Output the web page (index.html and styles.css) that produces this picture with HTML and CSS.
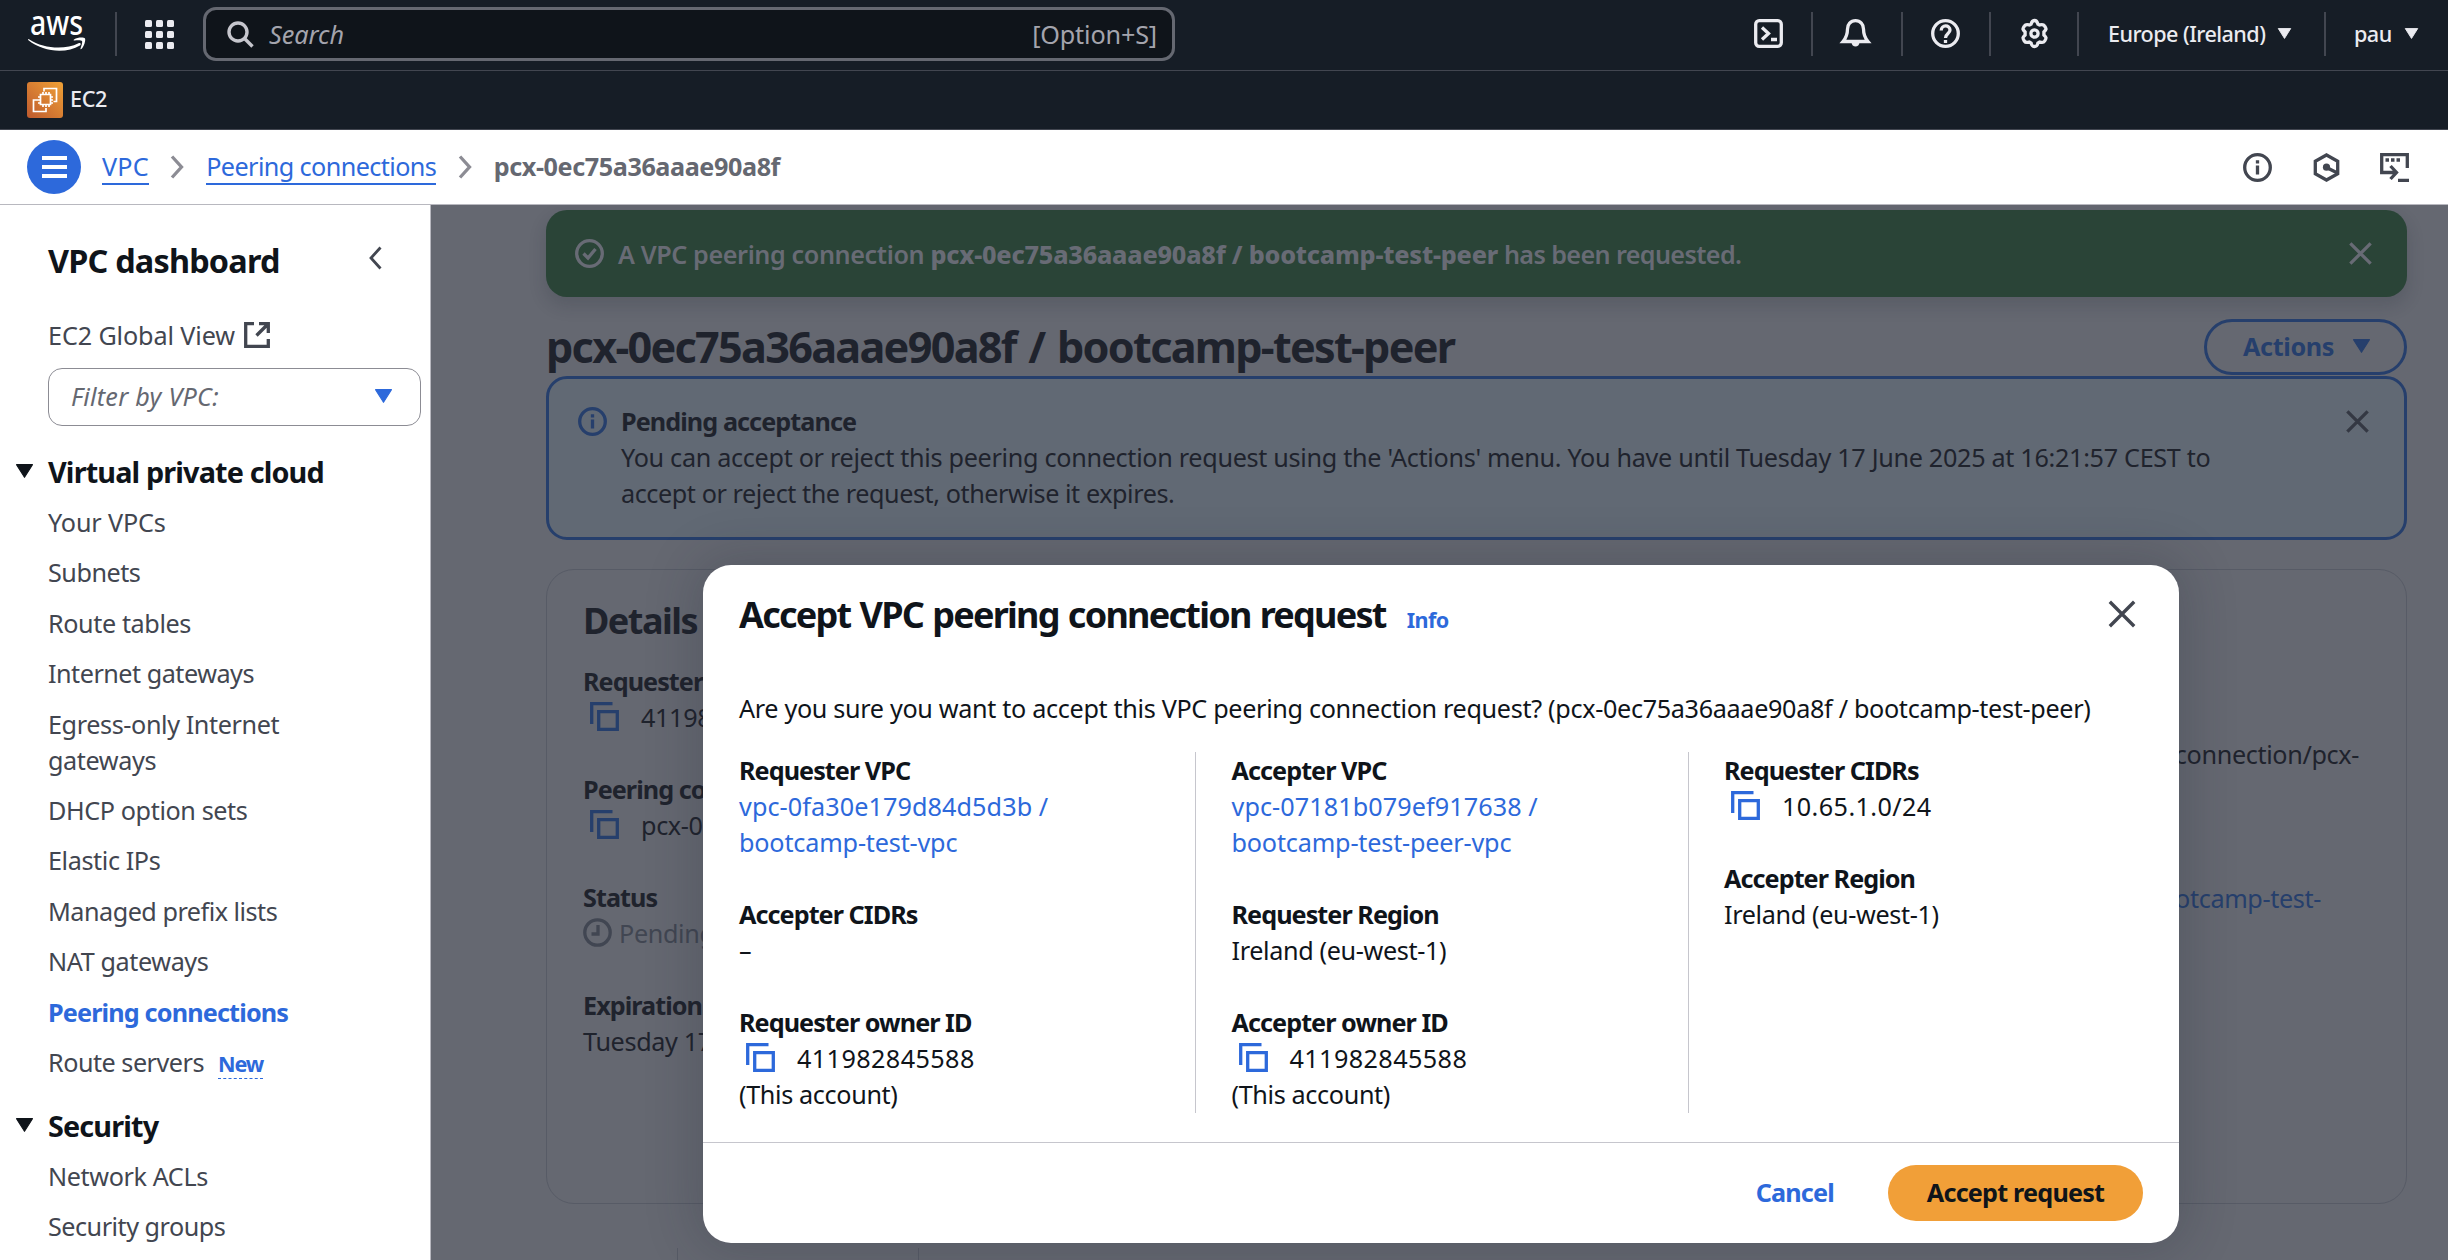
FILE: index.html
```
<!DOCTYPE html>
<html lang="en">
<head>
<meta charset="utf-8">
<title>Peering connections | VPC Console</title>
<link rel="stylesheet" href="styles.css">
</head>
<body>
<svg class="sprite" width="0" height="0">
  <symbol id="close" viewBox="0 0 16 16"><path d="M1.5 1.5l13 13M14.5 1.5l-13 13"/></symbol>
  <symbol id="caret" viewBox="0 0 16 12"><path d="M1.2 .6h13.6L8 11.4z"/></symbol>
  <symbol id="copy" viewBox="0 0 29 29"><path d="M22.5 1.7H1.7V22"/><path d="M8.7 9.7h18.6v17.6h-18.6z"/></symbol>
  <symbol id="info" viewBox="0 0 29 29"><circle cx="14.5" cy="14.5" r="12.8"/><path d="M14.5 12.5v9M14.5 7.2v3.4"/></symbol>
  <symbol id="right" viewBox="0 0 14 24"><path d="M2 1.5l9.5 10.5L2 22.5"/></symbol>
</svg>

<header class="topbar">
  <svg class="aws" viewBox="0 0 58 38">
    <text x="2" y="19.5" textLength="53" lengthAdjust="spacingAndGlyphs">aws</text>
    <path class="smile" d="M1 24.2C16 34 37 35 50.5 28.2C52.5 27.4 53.6 29 52 30.4C38 39 15 37 .4 25.2C-.2 24.4 .4 23.8 1 24.2z"/>
    <path class="smile" d="M46 24.4C50 21.8 56 22 57 23.4C57.8 25 56.2 31.4 53.4 34C52.6 34.4 52.2 34 52.6 33.2C53.6 30.6 54.6 27 54 26C53.4 25 49 25.2 46.6 25.6C45.6 25.6 45.2 25 46 24.4z"/>
  </svg>
  <i class="bar bar-logo"></i>
  <svg class="apps" viewBox="0 0 29 29">
    <g><rect width="7" height="7" rx="1.5"/><rect x="11" width="7" height="7" rx="1.5"/><rect x="22" width="7" height="7" rx="1.5"/>
    <rect y="11" width="7" height="7" rx="1.5"/><rect x="11" y="11" width="7" height="7" rx="1.5"/><rect x="22" y="11" width="7" height="7" rx="1.5"/>
    <rect y="22" width="7" height="7" rx="1.5"/><rect x="11" y="22" width="7" height="7" rx="1.5"/><rect x="22" y="22" width="7" height="7" rx="1.5"/></g>
  </svg>
  <div class="search">
    <svg class="lens" viewBox="0 0 27 27"><circle cx="11" cy="11" r="9"/><path d="M17.5 17.5l8 8"/></svg>
    <span class="placeholder">Search</span>
    <span class="shortcut">[Option+S]</span>
  </div>
  <nav class="tools">
    <div class="tool shell"><svg viewBox="0 0 29 29"><rect x="1.7" y="1.7" width="25.6" height="25.6" rx="3.5"/><path d="M8 8.5l6.5 6L8 20.5M17 20.5h6"/></svg></div>
    <div class="tool bell"><svg viewBox="0 0 29 29"><path d="M14.5 1.7C9.5 1.7 6.5 5.5 6.5 10C6.5 16 5 19 2 22.5H27C24 19 22.5 16 22.5 10C22.5 5.5 19.5 1.7 14.5 1.7z"/><path class="solid" d="M10.5 23h8c0 6-8 6-8 0z"/></svg></div>
    <div class="tool help"><svg viewBox="0 0 29 29"><circle cx="14.5" cy="14.5" r="12.8"/><path d="M10.2 11.5C10.2 5.5 19 5.5 19 11C19 14.5 14.5 14.5 14.5 19M14.5 21v3"/></svg></div>
    <div class="tool gear"><svg viewBox="0 0 29 29"><path d="M14.5 1.5C17 1.5 17.3 3.2 17.9 5.1L19.5 6C21.5 5.5 23.3 4.9 24.5 6.9C26.6 10 26.8 10 23.9 13V16C26.3 18.3 26.8 18.6 24.7 22C23.3 24.2 21.8 23.5 19.6 23L17.9 24C17.3 26.2 17.1 27.5 14.5 27.5S11.7 26.2 11.1 24L9.4 23C7.2 23.5 5.7 24.2 4.3 22C2.2 18.6 2.7 18.3 5.1 16V13C2.2 10 2.4 10 4.5 6.9C5.7 4.9 7.5 5.5 9.5 6L11.1 5.1C11.7 3.2 12 1.5 14.5 1.5z"/><circle cx="14.5" cy="14.5" r="3.6"/></svg></div>
    <div class="tool region">Europe (Ireland)<svg class="caret"><use href="#caret"/></svg></div>
    <div class="tool user">pau<svg class="caret"><use href="#caret"/></svg></div>
  </nav>
</header>

<div class="favorites">
  <svg class="ec2" viewBox="0 0 36 36">
    <defs><linearGradient id="og" x1="0" y1="1" x2="1" y2="0"><stop offset="0" stop-color="#bf5a2e"/><stop offset="1" stop-color="#efa136"/></linearGradient></defs>
    <rect width="36" height="36" rx="3" fill="url(#og)"/>
    <path d="M17 9.5V6.5h12.5v13h-3M12 18H6.5v11.5H19V26M13.5 12.5h10v10h-10zM16 10v2M19 10v2M22 10v2M16 23v2M19 23v2M22 23v2M11 15h2M11 18h2M11 21h2M24 15h2M24 18h2M24 21h2"/>
  </svg>
  <span>EC2</span>
</div>

<div class="crumbs">
  <div class="menu"><i></i><i></i><i></i></div>
  <a class="c1">VPC</a>
  <svg class="sep"><use href="#right"/></svg>
  <a class="c2">Peering connections</a>
  <svg class="sep"><use href="#right"/></svg>
  <b>pcx-0ec75a36aaae90a8f</b>
  <div class="panel-icons">
    <svg viewBox="0 0 29 29"><use href="#info"/></svg>
    <svg viewBox="0 0 29 29"><path d="M14.5 2L25.7 8.2V20.8L14.5 27L3.3 20.8V8.2z"/><path d="M14.5 14.5l11 5.5"/><circle class="dot" cx="14.5" cy="14.2" r="3.6"/></svg>
    <svg viewBox="0 0 29 29"><path d="M27.3 15V1.7H1.7V19.5H15M10.5 13l6 6.5l-6 6.5M18 27.3h11M5.5 7h3.5M11 7h3.5M16.5 7h3.5"/></svg>
  </div>
</div>

<div class="page">
  <aside class="side">
    <div class="side-title"><h2>VPC dashboard</h2><svg viewBox="0 0 14 24"><path d="M12.5 1.5L3 12l9.5 10.5"/></svg></div>
    <div class="global"><span>EC2 Global View</span><svg viewBox="0 0 26 26"><path d="M10 1.7H1.7v22.6h22.6V17M15 1.7h9.3V11M24 2L12.5 13.5"/></svg></div>
    <div class="select"><span>Filter by VPC:</span><svg class="caret"><use href="#caret"/></svg></div>
    <h3><svg class="caret"><use href="#caret"/></svg>Virtual private cloud</h3>
    <ul>
      <li class="loose">Your VPCs</li>
      <li>Subnets</li>
      <li class="wide">Route tables</li>
      <li>Internet gateways</li>
      <li class="wide">Egress-only Internet<br>gateways</li>
      <li class="wide">DHCP option sets</li>
      <li class="wide">Elastic IPs</li>
      <li>Managed prefix lists</li>
      <li class="wide">NAT gateways</li>
      <li class="active">Peering connections</li>
      <li>Route servers<span class="new">New</span></li>
    </ul>
    <h3><svg class="caret"><use href="#caret"/></svg>Security</h3>
    <ul>
      <li class="wide">Network ACLs</li>
      <li>Security groups</li>
    </ul>
  </aside>

  <main class="main">
    <div class="flash">
      <svg class="ok" viewBox="0 0 29 29"><circle cx="14.5" cy="14.5" r="12.8"/><path d="M8.5 14.5l4.5 4.5l7.5-9"/></svg>
      <p><span>A VPC peering connection </span><b>pcx-0ec75a36aaae90a8f / bootcamp-test-peer</b><span class="end"> has been requested.</span></p>
      <svg class="x"><use href="#close"/></svg>
    </div>
    <div class="heading">
      <h1>pcx-0ec75a36aaae90a8f / bootcamp-test-peer</h1>
      <div class="actions">Actions<svg class="caret"><use href="#caret"/></svg></div>
    </div>
    <div class="alert">
      <svg class="i"><use href="#info"/></svg>
      <div class="alert-text"><b>Pending acceptance</b><p>You can accept or reject this peering connection request using the 'Actions' menu. You have until Tuesday 17 June 2025 at 16:21:57 CEST to<br><span class="line2">accept or reject the request, otherwise it expires.</span></p></div>
      <svg class="x"><use href="#close"/></svg>
    </div>
    <section class="details">
      <h2>Details</h2>
      <div class="detail-cols">
        <dl>
          <div><dt>Requester</dt><dd class="copyable"><svg class="copy"><use href="#copy"/></svg>41198</dd></div>
          <div><dt>Peering co</dt><dd class="copyable"><svg class="copy"><use href="#copy"/></svg>pcx-0</dd></div>
          <div><dt>Status</dt><dd class="pending"><svg viewBox="0 0 29 29"><circle cx="14.5" cy="14.5" r="12.7"/><path d="M15 7v9H8.5"/></svg>Pending</dd></div>
          <div><dt>Expiration</dt><dd>Tuesday 17</dd></div>
        </dl>
        <div class="far"><span class="arn">connection/pcx-</span><span class="vpc">otcamp-test-</span></div>
      </div>
    </section>
    <div class="tabs"><i></i><i></i></div>
  </main>
</div>

<div class="modal">
  <div class="modal-head"><h2>Accept VPC peering connection request</h2><a>Info</a><svg class="x"><use href="#close"/></svg></div>
  <p class="question">Are you sure you want to accept this VPC peering connection request? (pcx-0ec75a36aaae90a8f / bootcamp-test-peer)</p>
  <div class="cols">
    <dl>
      <div><dt>Requester VPC</dt><dd><a>vpc-0fa30e179d84d5d3b /<br><span class="name">bootcamp-test-vpc</span></a></dd></div>
      <div><dt>Accepter CIDRs</dt><dd>–</dd></div>
      <div><dt>Requester owner ID</dt><dd class="copyable num"><svg class="copy"><use href="#copy"/></svg>411982845588</dd><dd>(This account)</dd></div>
    </dl>
    <dl>
      <div><dt>Accepter VPC</dt><dd><a>vpc-07181b079ef917638 /<br><span class="name">bootcamp-test-peer-vpc</span></a></dd></div>
      <div><dt>Requester Region</dt><dd>Ireland (eu-west-1)</dd></div>
      <div><dt>Accepter owner ID</dt><dd class="copyable num"><svg class="copy"><use href="#copy"/></svg>411982845588</dd><dd>(This account)</dd></div>
    </dl>
    <dl>
      <div><dt>Requester CIDRs</dt><dd class="copyable num"><svg class="copy"><use href="#copy"/></svg>10.65.1.0/24</dd></div>
      <div><dt>Accepter Region</dt><dd>Ireland (eu-west-1)</dd></div>
    </dl>
  </div>
  <div class="modal-foot"><span class="cancel">Cancel</span><span class="accept">Accept request</span></div>
</div>
</body>
</html>
```
FILE: styles.css
```
* { box-sizing: border-box; margin: 0; padding: 0; }
body {
  width: 2448px; height: 1260px; overflow: hidden; position: relative;
  display: flex; flex-direction: column;
  font: 440 25.2px/36px "Noto Sans", sans-serif; letter-spacing: -0.36px;
  color: #0f141a; background: #fff; white-space: nowrap;
}
svg { display: block; flex: none; fill: none; stroke: currentColor; stroke-width: 3.3; overflow: visible; }
.sprite { position: absolute; }
ul { list-style: none; }
b, dt, h1, h2, h3 { font-weight: 670; }
.caret { width: 19px; height: 14px; fill: currentColor; stroke-width: 1; stroke-linejoin: round; }
.x { stroke-width: 2.1; }

/* top navigation */
.topbar { display: flex; align-items: flex-start; height: 71px; flex: none; background: #161d26; border-bottom: 1px solid #424650; color: #ebebf0; }
.aws { width: 58px; height: 38px; margin: 15px 0 0 28px; color: #fff; }
.aws text { font: 500 34px "Noto Sans", sans-serif; fill: #fff; stroke: none; letter-spacing: 0; }
.aws .smile { fill: #fff; stroke: none; }
.bar-logo { width: 2px; height: 44px; margin: 12px 0 0 29px; background: #424650; }
.apps { width: 29px; height: 29px; margin: 20px 0 0 28px; fill: #ebebf0; stroke: none; }
.search { display: flex; align-items: center; width: 972px; height: 54px; margin: 7px 0 0 29px; padding: 0 15px 0 21px; border: 3px solid #656871; border-radius: 13px; background: #0f141a; color: #a4a4ad; }
.lens { width: 27px; height: 27px; color: #c6c6cd; stroke-width: 3.4; margin-right: 15px; }
.placeholder { font-style: italic; letter-spacing: 0; margin-top: -1px; }
.shortcut { margin-left: auto; margin-top: -1px; letter-spacing: -.15px; }
.tools { display: flex; margin: 12px 0 0 auto; height: 44px; font-size: 21.6px; font-weight: 500; letter-spacing: -.55px; }
.tool { display: flex; align-items: center; border-left: 2px solid #424650; padding-bottom: 1px; }
.tool > svg:not(.caret) { width: 29px; height: 29px; margin-left: 28px; }
.tool .caret { width: 15px; height: 11px; margin: -1px 0 0 12px; }
.tool.shell { border: 0; width: 29px; margin-right: 28px; }
.tool.shell > svg { margin-left: 0; }
.bell { width: 90px; }
.help { width: 88px; }
.gear { width: 88px; }
.tool.gear > svg { margin-left: 29px; }
.region { width: 247px; padding-left: 29px; }
.user { width: 124px; padding-left: 28px; }
.solid { fill: currentColor; stroke: none; }
.favorites { display: flex; align-items: center; gap: 7px; height: 59px; flex: none; padding-left: 27px; background: #161d26; border-bottom: 1px solid #424650; color: #ebebf0; font-size: 21.6px; font-weight: 500; }
.favorites span { margin-top: -2px; }
.ec2 { width: 36px; height: 36px; color: #fff; stroke-width: 1.7; }
.ec2 rect { stroke: none; }

/* breadcrumbs */
.crumbs { display: flex; align-items: center; height: 75px; flex: none; padding: 0 39px 0 27px; border-bottom: 1px solid #b8b8bf; color: #656871; }
.menu { display: flex; flex-direction: column; align-items: center; justify-content: center; gap: 5px; width: 54px; height: 54px; margin-right: 21px; border-radius: 50%; background: #2d69db; }
.menu i { width: 25px; height: 4px; background: #fff; }
.crumbs a { color: #2d69db; height: 35px; line-height: 33px; border-bottom: 2px solid; margin-top: 1px; letter-spacing: -.6px; }
.crumbs .c1 { letter-spacing: .15px; }
.crumbs b { margin-top: -2px; letter-spacing: -.42px; }
.sep { width: 14px; height: 24px; margin: 0 22px 0 21.5px; color: #8c8c94; }
.panel-icons { display: flex; gap: 39.5px; margin-left: auto; color: #424650; }
.panel-icons svg { width: 29px; height: 29px; }
.panel-icons .dot { fill: currentColor; stroke: none; }

.page { display: flex; flex: 1; min-height: 0; }

/* side navigation */
.side { width: 431px; flex: none; border-right: 1px solid #b8b8bf; padding: 34px 9px 0 48px; color: #424650; }
.side-title { display: flex; justify-content: space-between; padding-right: 39px; }
.side-title svg { width: 14px; height: 24px; margin-top: 7px; stroke-width: 2.8; }
.side h2 { font-size: 32.4px; line-height: 43px; letter-spacing: -.8px; color: #0f141a; }
.global { display: flex; gap: 9px; margin-top: 35px; letter-spacing: -.12px; }
.global svg { width: 26px; height: 26px; margin-top: 5px; }
.select { display: flex; align-items: center; justify-content: space-between; width: 373px; height: 58px; margin-top: 15px; padding: 0 27px 2px 22px; border: 1.5px solid #8c8c94; border-radius: 14px; font-style: italic; letter-spacing: .25px; color: #656871; }
.select .caret { color: #2d69db; }
.side h3 { display: flex; align-items: center; gap: 14px; margin: 28px 0 14px -33px; font-size: 28.8px; line-height: 36px; letter-spacing: -.85px; color: #0f141a; }
.side h3 .caret { margin-top: -2px; }
.side ul { display: flex; flex-direction: column; gap: 14.4px; letter-spacing: -.5px; }
.side .wide { letter-spacing: -.4px; }
.side .loose { letter-spacing: -.15px; }
.side .active { font-weight: 670; color: #2d69db; letter-spacing: -.84px; }
.new { display: inline-block; margin-left: 14px; font-size: 21.6px; line-height: 29px; font-weight: 670; letter-spacing: -1.1px; color: #2d69db; border-bottom: 1.5px dashed; }

/* page content, dimmed behind the dialog */
.main { flex: 1; display: flex; flex-direction: column; padding: 5px 41px 0 115px; background: #656871; color: #1f232d; overflow: hidden; }
.main > * { flex: none; }
.flash { display: flex; align-items: center; height: 87px; padding: 0 34px 0 29px; border-radius: 21px; background: #2a4437; color: #686b75; box-shadow: 0 8px 16px 2px rgba(30, 35, 48, .16); }
.flash p { margin: 0 auto 0 14px; font-weight: 600; white-space: pre; letter-spacing: -.4px; }
.flash b { font-weight: 800; letter-spacing: -.22px; }
.flash .end { letter-spacing: -.63px; }
.ok { width: 29px; height: 29px; }
.flash .x, .alert .x { width: 25px; height: 25px; }
.heading { display: flex; justify-content: space-between; align-items: center; margin-top: 22px; height: 56px; }
h1 { font-size: 43.2px; line-height: 54px; letter-spacing: -1.72px; word-spacing: 3px; }
.actions { display: flex; align-items: center; gap: 18px; width: 203px; height: 56px; padding: 0 0 2px 36px; border: 3px solid #263f6c; border-radius: 28px; color: #263f6c; font-weight: 670; }
.alert { display: flex; height: 164px; margin-top: 1px; padding: 24px 34px 0 29px; border: 3px solid #263f6c; border-radius: 21px; background: #616974; }
.alert .i { width: 29px; height: 29px; margin: 4px 14px 0 0; color: #263f6c; }
.alert-text { letter-spacing: -.31px; }
.alert-text b { display: block; letter-spacing: -.93px; }
.alert-text .line2 { letter-spacing: -.43px; }
.alert .x { margin: 6px 0 0 auto; color: #343843; }
.details { height: 635px; margin-top: 29px; padding: 28px 47px 0 36px; border: 1px solid #575b66; border-radius: 28px; }
.details h2 { font-size: 36px; line-height: 45px; letter-spacing: -1.5px; margin-bottom: 20px; }
.detail-cols { display: flex; justify-content: space-between; }
dl { display: flex; flex-direction: column; gap: 36px; }
dt { letter-spacing: -.95px; }
.copyable { display: flex; align-items: center; }
.copy { width: 29px; height: 29px; margin: -2px 22px 0 7px; color: #2d69db; }
.details .copy { color: #263f6c; }
.pending { display: flex; align-items: center; gap: 7px; color: #414652; }
.pending svg { width: 29px; height: 29px; margin-top: -2px; }
.far { display: flex; flex-direction: column; align-items: flex-end; gap: 108px; padding-top: 73px; }
.vpc { color: #263f6c; margin-right: 38px; }
.tabs { display: flex; margin-top: 44px; height: 20px; }
.tabs i { width: 132px; border-right: 1px solid #575b66; }
.tabs i + i { width: 241px; }

/* dialog */
.modal { position: absolute; left: 703px; top: 565px; width: 1476px; height: 678px; border-radius: 28px; background: #fff; box-shadow: 0 0 50px 10px rgba(30, 35, 48, .2); }
.modal a { color: #2d69db; }
.modal-head { display: flex; align-items: baseline; padding: 27px 42px 0 36px; height: 124px; }
.modal-head h2 { font-size: 36px; line-height: 45px; letter-spacing: -1.75px; word-spacing: 1.5px; }
.modal-head a { font-size: 21.6px; font-weight: 670; margin-left: 21px; letter-spacing: -.6px; }
.modal-head .x { width: 30px; height: 30px; align-self: flex-start; margin: 7px 0 0 auto; color: #424650; stroke-width: 1.8; }
.question { padding-left: 36px; margin-top: 1px; letter-spacing: -.33px; }
.cols { display: flex; margin: 26px 0 0 36px; height: 361px; }
.cols dl { flex: none; width: 457px; margin-right: 35.5px; }
.cols dl:not(:last-child) { border-right: 1px solid #c6c6cd; }
.cols dl:last-child { width: 400px; margin: 0; }
.cols a { letter-spacing: .08px; }
.cols a .name { letter-spacing: -.18px; }
.cols .num { letter-spacing: .4px; }
.modal-foot { display: flex; align-items: center; justify-content: flex-end; height: 101px; margin-top: 29px; padding: 0 36px 0 0; border-top: 1px solid #c6c6cd; font-weight: 670; }
.cancel { color: #2d69db; margin: -2px 54px 0 0; letter-spacing: -.8px; }
.accept { width: 255px; height: 56px; line-height: 54px; border-radius: 28px; text-align: center; background: #f19f38; letter-spacing: -.8px; }
```
